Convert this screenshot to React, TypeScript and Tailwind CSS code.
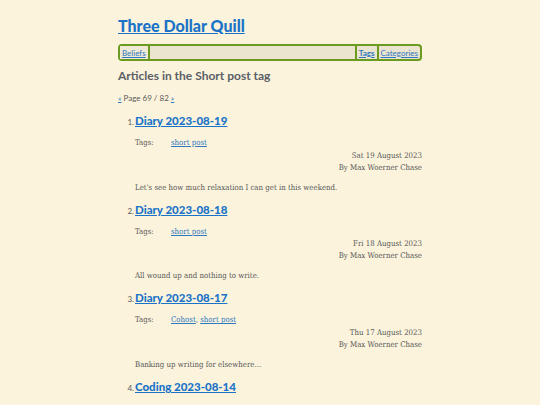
import React from 'react';

const posts = [
  {
    n: 1,
    title: 'Diary 2023-08-19',
    tags: ['short post'],
    date: 'Sat 19 August 2023',
    summary: "Let's see how much relaxation I can get in this weekend.",
  },
  {
    n: 2,
    title: 'Diary 2023-08-18',
    tags: ['short post'],
    date: 'Fri 18 August 2023',
    summary: 'All wound up and nothing to write.',
  },
  {
    n: 3,
    title: 'Diary 2023-08-17',
    tags: ['Cohost', 'short post'],
    date: 'Thu 17 August 2023',
    summary: 'Banking up writing for elsewhere...',
  },
  {
    n: 4,
    title: 'Coding 2023-08-14',
    tags: [],
    date: '',
    summary: '',
  },
];

const sans = "font-['Lato','Noto_Sans',sans-serif]";
const serif = "font-['DejaVu_Serif_Condensed','DejaVu_Serif',serif]";

export default function App() {
  return (
    <div className="bg-[#fbf3dc] text-[#5a5a5a] overflow-hidden h-[405px]">
      <div className="w-[304px] mx-auto pt-[14px]">
        <h1 className={`${sans} text-[16px] leading-[24px] font-black text-[#1a73c8] underline`}>
          Three Dollar Quill
        </h1>

        {/* nav */}
        <nav className={`${sans} mt-[6px] flex items-stretch h-[17px] border-2 border-[#6a9a1f] rounded-[4px] bg-[#ebe4cf] text-[8px]`}>
          <a className="px-[2px] flex items-center bg-[#efe9d6] text-[#2f78c0] underline border-r-2 border-[#6a9a1f]">
            Beliefs
          </a>
          <div className="flex-1" />
          <a className="px-[2px] flex items-center font-bold text-[#2f78c0] underline border-l-2 border-r-2 border-[#6a9a1f]">
            Tags
          </a>
          <a className="px-[2px] flex items-center text-[#2f78c0] underline">Categories</a>
        </nav>

        <h2 className={`${sans} mt-[7px] text-[12px] leading-[16px] font-bold text-[#5a6066]`}>
          Articles in the Short post tag
        </h2>

        <p className={`${sans} mt-[8px] text-[8px] text-[#5a5a5a]`}>
          <a className="text-[#2f78c0] underline">«</a> Page 69 / 82{' '}
          <a className="text-[#2f78c0] underline">»</a>
        </p>

        <ol className="mt-[8px] pl-[17px]">
          {posts.map((p) => (
            <li key={p.n} className="mb-[7px]">
              <div className="flex items-baseline">
                <span className={`${sans} w-0 text-[8px] text-[#5a5a5a] flex justify-end`}>
                  <span className="pr-[1px] whitespace-nowrap">{p.n}.</span>
                </span>
                <a className={`${sans} text-[11.5px] leading-[18px] font-black text-[#1a73c8] underline`}>
                  {p.title}
                </a>
              </div>
              {p.date && (
                <div className={`${serif} text-[7.8px] text-[#5a5a5a]`}>
                  <div className="mt-[7px] flex">
                    <span className="w-[36px]">Tags:</span>
                    <span>
                      {p.tags.map((t, i) => (
                        <span key={t}>
                          <a className="text-[#2f78c0] underline">{t}</a>
                          {i < p.tags.length - 1 ? ', ' : ''}
                        </span>
                      ))}
                    </span>
                  </div>
                  <div className="mt-[1px] text-right leading-[12px]">{p.date}</div>
                  <div className="text-right leading-[12px]">By Max Woerner Chase</div>
                  <p className="mt-[8px] leading-[12px]">{p.summary}</p>
                </div>
              )}
            </li>
          ))}
        </ol>
      </div>
    </div>
  );
}
